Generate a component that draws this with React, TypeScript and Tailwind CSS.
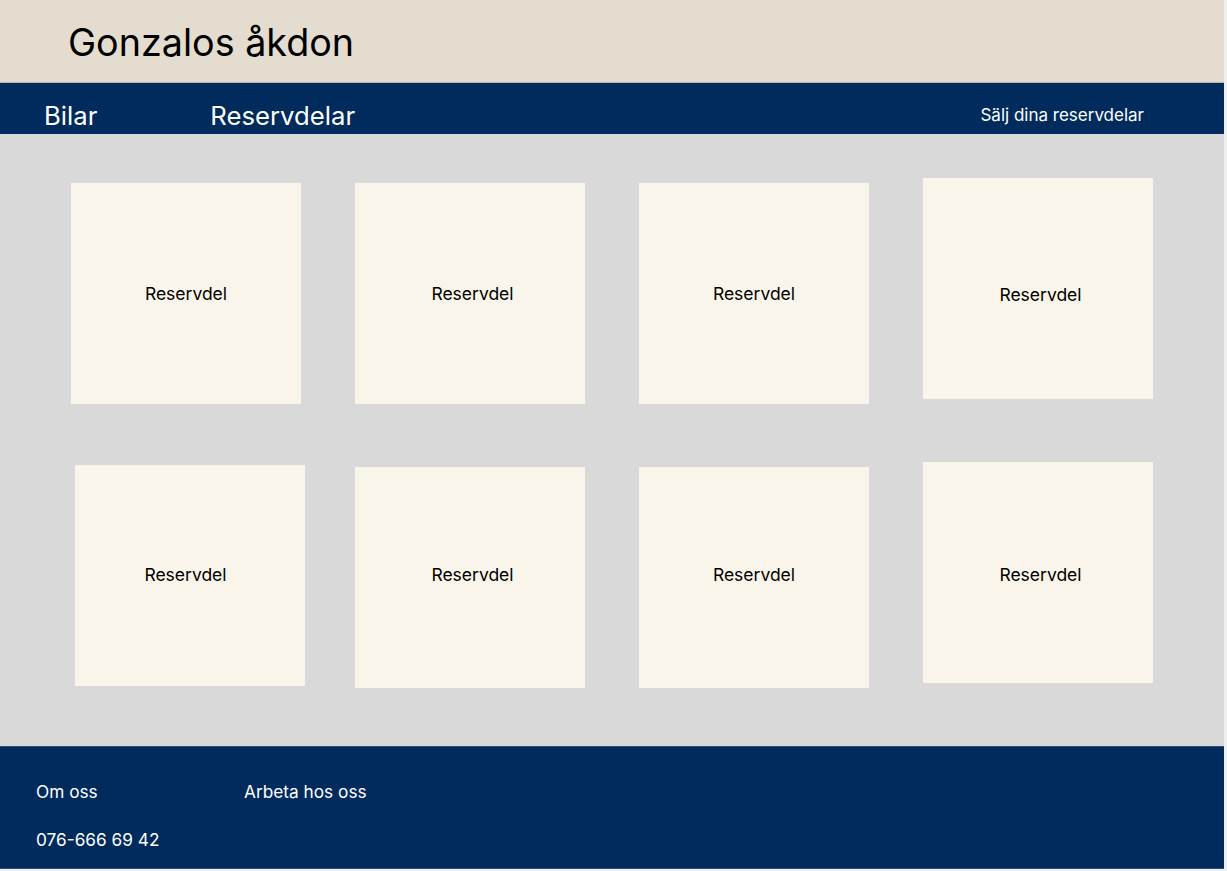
const parts = [
  { id: 1, cls: 'mt-[5px] pt-[2px]' },
  { id: 2, cls: 'mt-[5px] pl-[5px] pt-[2px]' },
  { id: 3, cls: 'mt-[5px] pt-[2px]' },
  { id: 4, cls: 'pl-[5px] pt-[13px]' },
  { id: 5, cls: 'mt-[3px] ml-[4px] pr-[9px]' },
  { id: 6, cls: 'mt-[5px] pl-[5px] pb-[5px]' },
  { id: 7, cls: 'mt-[5px] pb-[5px]' },
  { id: 8, cls: 'pl-[5px] pt-[5px]' },
];

export default function App() {
  return (
    <div className="min-h-screen bg-[#efefef] font-['Inter',sans-serif]">
      <div className="w-[1224px] h-[869px] flex flex-col">
        {/* Header */}
        <header className="h-[83px] bg-[#e3dccf] border-b border-[#b9b4ab] flex items-center pl-[68px] pt-[3px] shrink-0">
          <h1 className="text-[37.7px] leading-none text-black">Gonzalos åkdon</h1>
        </header>

        {/* Nav */}
        <nav className="h-[51px] bg-[#002b5c] flex items-center text-white shrink-0 pt-[14px]">
          <a className="ml-[44px] text-[25.7px] leading-none">Bilar</a>
          <a className="ml-[113px] text-[25.7px] leading-none">Reservdelar</a>
          <a className="ml-auto mr-[80px] text-[17px] leading-none">Sälj dina reservdelar</a>
        </nav>

        {/* Parts grid */}
        <main className="flex-1 bg-[#d9d9d9] pl-[71px] pt-[44px]">
          <div className="grid grid-cols-[230px_230px_230px_230px] gap-x-[54px] gap-y-[58px] items-start">
            {parts.map((p) => (
              <div
                key={p.id}
                className={`w-[230px] h-[221px] bg-[#f9f5ea] flex items-center justify-center text-[17.5px] text-black ${p.cls}`}
              >
                Reservdel
              </div>
            ))}
          </div>
        </main>

        {/* Footer */}
        <footer className="h-[123px] bg-[#002b5c] border-t border-[#2d4f78] border-b text-white text-[17.25px] shrink-0 pl-[36px] pt-[32px]">
          <div className="flex">
            <span className="w-[208px]">Om oss</span>
            <span>Arbeta hos oss</span>
          </div>
          <div className="mt-[22px]">076-666 69 42</div>
        </footer>
      </div>
    </div>
  );
}
